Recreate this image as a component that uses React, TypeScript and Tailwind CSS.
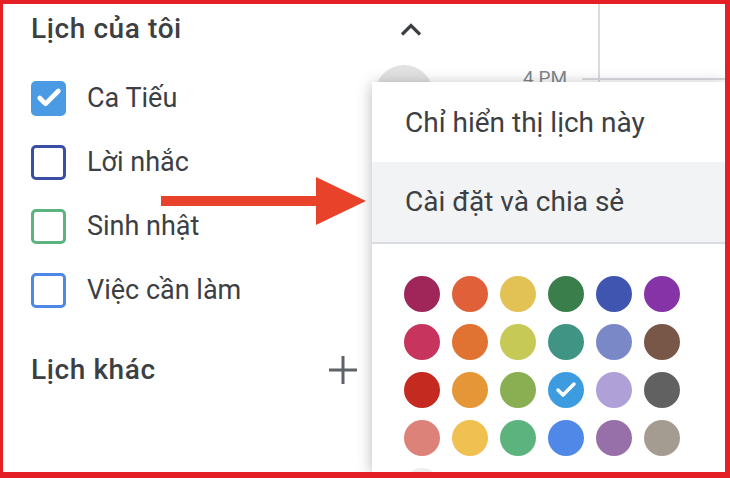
import { Check } from 'lucide-react'

const calendars = [
  { name: 'Ca Tiếu', color: '#4a9be3', checked: true },
  { name: 'Lời nhắc', color: '#3a4fa3', checked: false },
  { name: 'Sinh nhật', color: '#5cb37e', checked: false },
  { name: 'Việc cần làm', color: '#4f87e6', checked: false },
]

const swatches = [
  ['#a0265a', '#e0603a', '#e2c255', '#3a7f4b', '#3f55b0', '#8733a8'],
  ['#c7355f', '#e07232', '#c6c955', '#3f9484', '#7a88c7', '#785749'],
  ['#c42a20', '#e59636', '#8aae52', '#3d9ce0', '#b0a0d8', '#616161'],
  ['#dc8278', '#f0c050', '#5db37e', '#5088e8', '#9770aa', '#a59c91'],
]

export default function App() {
  return (
    <div className="relative w-[730px] h-[478px] overflow-hidden bg-white border-[#e41f26] border-t-4 border-l-[3px] border-r-[5px] border-b-[6px] font-['Roboto',sans-serif] text-[#3c4043]">
      <div className="flex h-full">
        {/* Sidebar */}
        <div className="w-[437px] shrink-0 pl-[28px] pr-[19px]">
          <div className="h-[50px] flex items-center justify-between">
            <span className="text-[28px] font-medium tracking-[0.6px]">Lịch của tôi</span>
            <svg width="22" height="13" viewBox="0 0 22 13" className="mr-[-1px]">
              <path d="M2 11.5 L11 2.5 L20 11.5" fill="none" stroke="#3c4043" strokeWidth="3.2" />
            </svg>
          </div>
          <div className="mt-[12px] relative">
            {/* hover ripple behind the menu */}
            <div className="absolute left-[344px] top-[-1px] w-[58px] h-[58px] rounded-full bg-[#e2e2e2]" />
            {calendars.map((c) => (
              <div key={c.name} className="h-[64px] flex items-center">
                <div
                  className="w-[35px] h-[35px] rounded-[5px] border-[3.5px] flex items-center justify-center"
                  style={{ borderColor: c.color, backgroundColor: c.checked ? c.color : 'transparent' }}
                >
                  {c.checked && <Check size={28} color="#fff" strokeWidth={4} />}
                </div>
                <span className="ml-[21px] text-[27px]">{c.name}</span>
              </div>
            ))}
          </div>
          <div className="mt-[16px] h-[64px] flex items-center justify-between">
            <span className="text-[28px] font-medium tracking-[0.6px]">Lịch khác</span>
            <svg width="30" height="30" viewBox="0 0 30 30" className="mr-[63px]">
              <path d="M15 1 V29 M1 15 H29" stroke="#5f6368" strokeWidth="3" />
            </svg>
          </div>
        </div>

        {/* Time gutter */}
        <div className="w-[158px] shrink-0 relative">
          <span className="absolute right-[31px] top-[60px] text-[19px] text-[#80868b]">4 PM</span>
          <div className="absolute right-0 top-[74px] w-[16px] h-[2px] bg-[#dadce0]" />
        </div>

        {/* Day grid */}
        <div className="flex-1 border-l-2 border-[#dadce0] relative">
          <div className="absolute left-0 right-0 top-[74px] h-[2px] bg-[#dadce0]" />
        </div>
      </div>

      {/* Red annotation arrow */}
      <svg className="absolute left-[158px] top-[169px]" width="210" height="52" viewBox="0 0 210 52">
        <rect x="0" y="23" width="160" height="10" fill="#e8432a" />
        <polygon points="155,4 205,28 155,52" fill="#e8432a" />
      </svg>

      {/* Context menu */}
      <div className="absolute left-[369px] top-[78px] right-0 bottom-0 bg-white shadow-[0_2px_14px_rgba(0,0,0,0.28)]">
        <div className="h-[80px] flex items-center pl-[33px] pt-[2px] text-[28px]">Chỉ hiển thị lịch này</div>
        <div className="h-[80px] flex items-center pl-[33px] text-[28px] bg-[#f1f3f4]">Cài đặt và chia sẻ</div>
        <div className="h-[2px] bg-[#dadce0]" />
        <div className="pt-[32px] pl-[32px] flex flex-col gap-[12px]">
          {swatches.map((row, ri) => (
            <div key={ri} className="flex gap-[12px]">
              {row.map((col, ci) => (
                <div
                  key={col}
                  className="w-[36px] h-[36px] rounded-full flex items-center justify-center"
                  style={{ backgroundColor: col }}
                >
                  {ri === 2 && ci === 3 && <Check size={24} color="#fff" strokeWidth={3.5} />}
                </div>
              ))}
            </div>
          ))}
          <div className="flex">
            <div className="w-[36px] h-[36px] rounded-full bg-[#eeeeee]" />
          </div>
        </div>
      </div>
    </div>
  )
}
